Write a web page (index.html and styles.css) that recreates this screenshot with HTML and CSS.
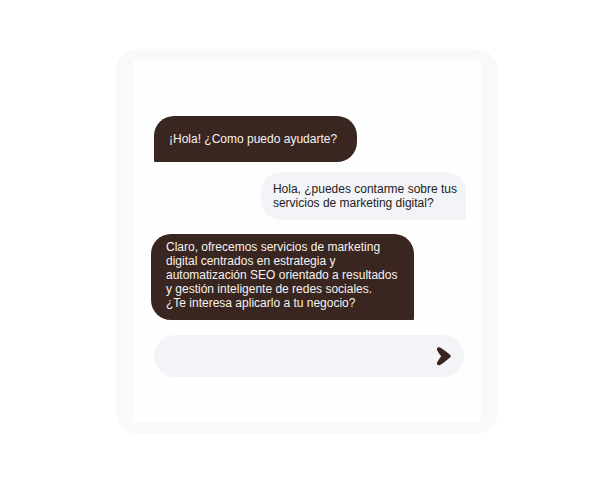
FILE: index.html
```html
<!DOCTYPE html>
<html lang="es">
<head>
  <meta charset="utf-8">
  <meta name="viewport" content="width=device-width, initial-scale=1">
  <title>Chat</title>
  <link rel="stylesheet" href="styles.css">
</head>
<body>
  <main class="frame">
    <section class="chat">
      <div class="messages">
        <p class="bubble bubble-bot bubble-greeting">¡Hola! ¿Como puedo ayudarte?</p>
        <p class="bubble bubble-user">Hola, ¿puedes contarme sobre tus<br>servicios de marketing digital?</p>
        <p class="bubble bubble-bot bubble-answer">Claro, ofrecemos servicios de marketing<br>digital centrados en estrategia y<br>automatización SEO orientado a resultados<br>y gestión inteligente de redes sociales.<br>¿Te interesa aplicarlo a tu negocio?</p>
      </div>
      <form class="composer">
        <input class="composer-input" type="text" aria-label="Mensaje">
        <button class="composer-send" type="button" aria-label="Enviar">
          <svg class="send-icon" viewBox="0 0 16 20" aria-hidden="true">
            <path d="M1.200 4.200C.300 2 1.900.700 4 1.500Q8 3.500 14.300 9Q15.400 10.200 14.300 11.300Q8.500 16.500 4.200 18.900C2 19.900.100 18.500 1.100 16.400Q2.800 13.200 5.200 10.200Q2.500 7.400 1.200 4.200Z"/>
          </svg>
        </button>
      </form>
    </section>
  </main>
</body>
</html>
```
FILE: styles.css
```css
* {
  box-sizing: border-box;
}

body {
  margin: 0;
  padding: 49px 17px 49px 16px;
  background: #fff;
  font-family: "Liberation Sans", Arial, sans-serif;
  font-size: 12px;
  line-height: 14px;
}

.frame {
  max-width: 382px;
  margin: 0 auto;
  padding: 12px 17px;
  border-radius: 22px;
  background: #f9f9f9;
}

.chat {
  padding: 55px 15px 45px 18px;
  background: #fefefe;
}

.messages {
  display: flex;
  flex-direction: column;
  align-items: flex-start;
}

.bubble {
  margin: 0;
  border-radius: 20px;
}

.bubble-bot {
  background: #3a2620;
  color: #f6f2f0;
}

.bubble-greeting {
  margin-left: 3px;
  padding: 16px 20px 16px 15px;
  border-bottom-left-radius: 1px;
}

.bubble-user {
  align-self: flex-end;
  margin: 10px 0 14px;
  padding: 10px 9px 10px 12px;
  border-bottom-right-radius: 1px;
  background: #f3f4f7;
  color: #222;
}

.bubble-answer {
  padding: 6px 17px 10px 15px;
  border-bottom-right-radius: 1px;
}

.composer {
  display: flex;
  align-items: center;
  height: 42px;
  margin: 15px 2px 0 3px;
  padding: 0 12px 0 16px;
  border-radius: 21px;
  background: #f3f4f7;
}

.composer-input {
  flex: 1;
  min-width: 0;
  border: 0;
  outline: 0;
  background: transparent;
  font: inherit;
}

.composer-send {
  display: flex;
  padding: 0;
  border: 0;
  background: transparent;
  cursor: pointer;
}

.send-icon {
  width: 16px;
  height: 20px;
  fill: #3a2620;
}
```
